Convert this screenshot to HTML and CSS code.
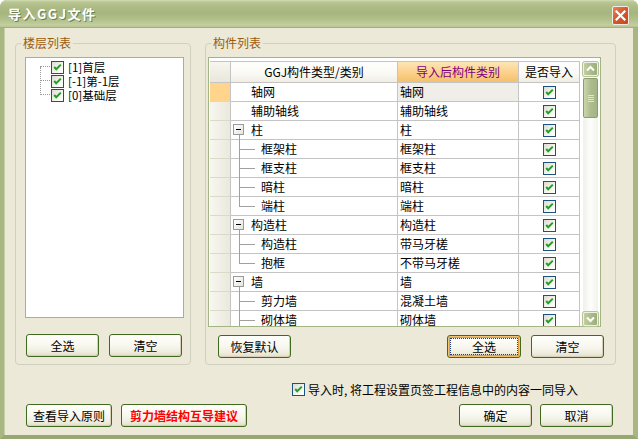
FILE: index.html
```html
<!DOCTYPE html>
<html>
<head>
<meta charset="utf-8">
<link rel="stylesheet" href="styles.css">
</head>
<body>
<div class="window">
  <div class="titlebar">
    <span class="title">导入GGJ文件</span>
    <div class="close"><svg width="11" height="11" viewBox="0 0 11 11"><path d="M1.5 1.5 L9.5 9.5 M9.5 1.5 L1.5 9.5" stroke="#fff" stroke-width="2.2" stroke-linecap="square"/></svg></div>
  </div>
  <div class="frame">
    <div class="groups">
      <div class="group group-left">
        <span class="legend">楼层列表</span>
        <div class="treebox">
          <div class="tree-list">
            <div class="tree-item"><span class="cb"><svg width="11" height="11" viewBox="0 0 11 11"><path d="M2.2 5 L4.2 7.2 L8.8 2.6" fill="none" stroke="#21a121" stroke-width="2"/></svg></span><span class="tree-text">[1]首层</span></div>
            <div class="tree-item"><span class="cb"><svg width="11" height="11" viewBox="0 0 11 11"><path d="M2.2 5 L4.2 7.2 L8.8 2.6" fill="none" stroke="#21a121" stroke-width="2"/></svg></span><span class="tree-text">[-1]第-1层</span></div>
            <div class="tree-item"><span class="cb"><svg width="11" height="11" viewBox="0 0 11 11"><path d="M2.2 5 L4.2 7.2 L8.8 2.6" fill="none" stroke="#21a121" stroke-width="2"/></svg></span><span class="tree-text">[0]基础层</span></div>
          </div>
        </div>
        <div class="btnrow btnrow-left">
          <button class="btn">全选</button>
          <button class="btn">清空</button>
        </div>
      </div>
      <div class="group group-right">
        <span class="legend">构件列表</span>
        <div class="grid">
          <div class="grid-main">
            <div class="row head">
              <div class="rh"></div>
              <div class="c hc">GGJ构件类型/类别</div>
              <div class="c hc hc-active">导入后构件类别</div>
              <div class="c hc">是否导入</div>
            </div>
            <div class="row">
              <div class="rh rh-sel"></div>
              <div class="c c1 top">轴网</div>
              <div class="c c2 cur">轴网</div>
              <div class="c c3"><span class="cb"><svg width="11" height="11" viewBox="0 0 11 11"><path d="M2.2 5 L4.2 7.2 L8.8 2.6" fill="none" stroke="#21a121" stroke-width="2"/></svg></span></div>
            </div>
            <div class="row">
              <div class="rh"></div>
              <div class="c c1 top">辅助轴线</div>
              <div class="c c2">辅助轴线</div>
              <div class="c c3"><span class="cb"><svg width="11" height="11" viewBox="0 0 11 11"><path d="M2.2 5 L4.2 7.2 L8.8 2.6" fill="none" stroke="#21a121" stroke-width="2"/></svg></span></div>
            </div>
            <div class="row">
              <div class="rh"></div>
              <div class="c c1 parent"><span class="exp"></span>柱</div>
              <div class="c c2">柱</div>
              <div class="c c3"><span class="cb"><svg width="11" height="11" viewBox="0 0 11 11"><path d="M2.2 5 L4.2 7.2 L8.8 2.6" fill="none" stroke="#21a121" stroke-width="2"/></svg></span></div>
            </div>
            <div class="row">
              <div class="rh"></div>
              <div class="c c1 child">框架柱</div>
              <div class="c c2">框架柱</div>
              <div class="c c3"><span class="cb"><svg width="11" height="11" viewBox="0 0 11 11"><path d="M2.2 5 L4.2 7.2 L8.8 2.6" fill="none" stroke="#21a121" stroke-width="2"/></svg></span></div>
            </div>
            <div class="row">
              <div class="rh"></div>
              <div class="c c1 child">框支柱</div>
              <div class="c c2">框支柱</div>
              <div class="c c3"><span class="cb"><svg width="11" height="11" viewBox="0 0 11 11"><path d="M2.2 5 L4.2 7.2 L8.8 2.6" fill="none" stroke="#21a121" stroke-width="2"/></svg></span></div>
            </div>
            <div class="row">
              <div class="rh"></div>
              <div class="c c1 child">暗柱</div>
              <div class="c c2">暗柱</div>
              <div class="c c3"><span class="cb"><svg width="11" height="11" viewBox="0 0 11 11"><path d="M2.2 5 L4.2 7.2 L8.8 2.6" fill="none" stroke="#21a121" stroke-width="2"/></svg></span></div>
            </div>
            <div class="row">
              <div class="rh"></div>
              <div class="c c1 child last">端柱</div>
              <div class="c c2">端柱</div>
              <div class="c c3"><span class="cb"><svg width="11" height="11" viewBox="0 0 11 11"><path d="M2.2 5 L4.2 7.2 L8.8 2.6" fill="none" stroke="#21a121" stroke-width="2"/></svg></span></div>
            </div>
            <div class="row">
              <div class="rh"></div>
              <div class="c c1 parent"><span class="exp"></span>构造柱</div>
              <div class="c c2">构造柱</div>
              <div class="c c3"><span class="cb"><svg width="11" height="11" viewBox="0 0 11 11"><path d="M2.2 5 L4.2 7.2 L8.8 2.6" fill="none" stroke="#21a121" stroke-width="2"/></svg></span></div>
            </div>
            <div class="row">
              <div class="rh"></div>
              <div class="c c1 child">构造柱</div>
              <div class="c c2">带马牙槎</div>
              <div class="c c3"><span class="cb"><svg width="11" height="11" viewBox="0 0 11 11"><path d="M2.2 5 L4.2 7.2 L8.8 2.6" fill="none" stroke="#21a121" stroke-width="2"/></svg></span></div>
            </div>
            <div class="row">
              <div class="rh"></div>
              <div class="c c1 child last">抱框</div>
              <div class="c c2">不带马牙槎</div>
              <div class="c c3"><span class="cb"><svg width="11" height="11" viewBox="0 0 11 11"><path d="M2.2 5 L4.2 7.2 L8.8 2.6" fill="none" stroke="#21a121" stroke-width="2"/></svg></span></div>
            </div>
            <div class="row">
              <div class="rh"></div>
              <div class="c c1 parent"><span class="exp"></span>墙</div>
              <div class="c c2">墙</div>
              <div class="c c3"><span class="cb"><svg width="11" height="11" viewBox="0 0 11 11"><path d="M2.2 5 L4.2 7.2 L8.8 2.6" fill="none" stroke="#21a121" stroke-width="2"/></svg></span></div>
            </div>
            <div class="row">
              <div class="rh"></div>
              <div class="c c1 child">剪力墙</div>
              <div class="c c2">混凝土墙</div>
              <div class="c c3"><span class="cb"><svg width="11" height="11" viewBox="0 0 11 11"><path d="M2.2 5 L4.2 7.2 L8.8 2.6" fill="none" stroke="#21a121" stroke-width="2"/></svg></span></div>
            </div>
            <div class="row">
              <div class="rh"></div>
              <div class="c c1 child">砌体墙</div>
              <div class="c c2">砌体墙</div>
              <div class="c c3"><span class="cb"><svg width="11" height="11" viewBox="0 0 11 11"><path d="M2.2 5 L4.2 7.2 L8.8 2.6" fill="none" stroke="#21a121" stroke-width="2"/></svg></span></div>
            </div>
          </div>
          <div class="vscroll">
            <div class="sb-btn"><svg width="13" height="12" viewBox="0 0 13 12"><path d="M3 7.5 L6.5 4 L10 7.5" fill="none" stroke="#fff" stroke-width="2"/></svg></div>
            <div class="sb-thumb"><span class="grip"></span></div>
            <div class="sb-track"></div>
            <div class="sb-btn"><svg width="13" height="12" viewBox="0 0 13 12"><path d="M3 4.5 L6.5 8 L10 4.5" fill="none" stroke="#fff" stroke-width="2"/></svg></div>
          </div>
        </div>
        <div class="btnrow btnrow-right">
          <button class="btn">恢复默认</button>
          <span class="spacer"></span>
          <button class="btn btn-focus">全选</button>
          <button class="btn">清空</button>
        </div>
      </div>
    </div>
    <div class="option">
      <span class="cb"><svg width="11" height="11" viewBox="0 0 11 11"><path d="M2.2 5 L4.2 7.2 L8.8 2.6" fill="none" stroke="#21a121" stroke-width="2"/></svg></span>
      <span class="option-text">导入时, 将工程设置页签工程信息中的内容一同导入</span>
    </div>
    <div class="bottom">
      <button class="btn btn-wide">查看导入原则</button>
      <button class="btn btn-red">剪力墙结构互导建议</button>
      <span class="spacer"></span>
      <button class="btn">确定</button>
      <button class="btn">取消</button>
    </div>
  </div>
</div>
</body>
</html>
```

FILE: styles.css
```css
* { box-sizing: border-box; }

body {
  margin: 0;
  width: 638px;
  height: 439px;
  font-family: "Noto Sans CJK SC", "DejaVu Sans", sans-serif;
  font-size: 12px;
  color: #000;
  background: #fff;
}

.window {
  width: 638px;
  height: 439px;
  display: flex;
  flex-direction: column;
  border-radius: 7px 7px 0 0;
  overflow: hidden;
  background: #a8b782;
}

.titlebar {
  height: 28px;
  flex: none;
  display: flex;
  align-items: center;
  padding: 0 9px 0 8px;
  background: linear-gradient(#d3dbb3 0, #bac794 2px, #aebd86 6px, #a6b57d 13px, #b3c18c 20px, #c3cf9e 25px, #b7c492 27px, #8c9c68 28px);
}

.title {
  color: #fff;
  font-weight: bold;
  font-size: 13px;
  letter-spacing: 1.5px;
  text-shadow: 1px 1px 0 #6f7d50;
  flex: 1;
  margin-top: -1px;
}

.close {
  width: 17px;
  height: 19px;
  margin-top: 3px;
  border: 1px solid #f4ece2;
  border-radius: 2px;
  background: linear-gradient(135deg, #e8845d, #d65a2e 45%, #c24a20);
  display: flex;
  align-items: center;
  justify-content: center;
}

.frame {
  flex: 1;
  display: flex;
  flex-direction: column;
  background: #ece9d8;
  border-left: 4px solid #a8b782;
  border-right: 5px solid #a8b782;
  border-bottom: 4px solid #98a873;
  box-shadow: inset 1px 0 0 #c4cfa4;
}

.groups {
  display: flex;
  gap: 14px;
  margin-top: 15px;
  padding-left: 11px;
  height: 322px;
}

.group {
  position: relative;
  height: 322px;
  border: 1px solid #d0d0bf;
  border-radius: 4px;
  padding-top: 13px;
}

.group-left { width: 176px; padding-left: 9px; }
.group-right { width: 411px; padding-left: 2px; }

.legend {
  position: absolute;
  top: -8px;
  left: 5px;
  padding: 0 2px;
  background: #ece9d8;
  color: #9d5b0c;
  line-height: 14px;
}

.treebox {
  width: 159px;
  height: 261px;
  background: #fff;
  border: 1px solid #a3b585;
  padding-top: 2px;
}

.tree-list {
  position: relative;
  padding-left: 25px;
}

.tree-list::before {
  content: "";
  position: absolute;
  left: 14px;
  top: 7px;
  height: 28px;
  border-left: 1px dotted #9a9a9a;
}

.tree-item {
  position: relative;
  height: 14px;
  display: flex;
  align-items: center;
  gap: 4px;
}

.tree-item::before {
  content: "";
  position: absolute;
  left: -11px;
  top: 6px;
  width: 10px;
  border-top: 1px dotted #9a9a9a;
}

.tree-text {
  display: block;
  height: 14px;
  line-height: 14px;
  font-size: 11.5px;
}

.cb {
  width: 13px;
  height: 13px;
  flex: none;
  display: inline-flex;
  align-items: center;
  justify-content: center;
  border: 1px solid #1c5180;
  background: linear-gradient(135deg, #dcdcd3, #f6f6f2 60%, #fff);
}

.btnrow { display: flex; }
.btnrow-left { margin-top: 16px; padding-left: 1px; gap: 10px; }
.btnrow-right { margin-top: 8px; padding-left: 10px; padding-right: 11px; gap: 10px; }
.spacer { flex: 1; }

.btn {
  width: 73px;
  height: 23px;
  padding: 0;
  border: 1px solid #3f6a20;
  border-radius: 3px;
  font-family: "Noto Sans CJK SC", sans-serif;
  font-size: 12px;
  color: #000;
  background: linear-gradient(#fffffb 0, #f8f7ef 50%, #efede0 80%, #e2ddc6 100%);
  box-shadow: inset -1px -1px 0 #d6d0b8;
  position: relative;
}

.btn-focus {
  width: 74px;
  box-shadow: inset 0 0 0 1px #f4c26e, inset 0 0 0 2px #e39a37;
}

.btn-focus::after {
  content: "";
  position: absolute;
  inset: 2px;
  border: 1px dotted #1a3b88;
}

.btn-wide { width: 86px; }
.btn-red { width: 126px; color: #ff0000; font-weight: bold; }

/* grid */
.grid {
  width: 393px;
  height: 270px;
  display: flex;
  align-items: flex-start;
  background: #fff;
  border: 1px solid #a3b585;
  padding: 3px 2px 0 1px;
}

.grid-main {
  width: 370px;
  height: 265px;
  overflow: hidden;
}

.row {
  display: grid;
  grid-template-columns: 21px 167px 121px 61px;
  height: 19px;
}

.row.head { height: 22px; }

.c {
  position: relative;
  border-right: 1px solid #c4c4c4;
  border-bottom: 1px solid #c4c4c4;
  line-height: 18px;
  white-space: nowrap;
}

.rh {
  border-right: 1px solid #c4c4c4;
  border-bottom: 1px solid #dcd9c8;
  background: linear-gradient(90deg, #f7f6f0, #ebe9dc);
}

.head .rh {
  border-top: 1px solid #c4c4c4;
  border-bottom: 1px solid #c4c4c4;
  background: linear-gradient(#f7f6f0, #e9e7da);
}

.rh-sel { background: #ffd48c; }

.hc {
  border-top: 1px solid #c4c4c4;
  text-align: center;
  line-height: 20px;
  background: linear-gradient(#fefefd 0, #faf9f4 60%, #efede3 100%);
}

.hc-active {
  color: #800080;
  background: linear-gradient(#fde5b5 0, #fbd08a 55%, #f4c06c 100%);
}

.c1.top, .c1.parent { padding-left: 20px; }
.c1.child { padding-left: 30px; }
.c2 { padding-left: 2px; }
.cur { background: #efeee8; }

.c3 {
  display: flex;
  align-items: center;
  justify-content: center;
  padding-left: 1px;
}

.exp {
  position: absolute;
  left: 2px;
  top: 3px;
  width: 11px;
  height: 11px;
  border: 1px solid #9a9a9a;
  background: linear-gradient(135deg, #fff, #e4e4de);
}

.exp::after {
  content: "";
  position: absolute;
  left: 2px;
  top: 4px;
  width: 5px;
  height: 1px;
  background: #000;
}

.parent::after {
  content: "";
  position: absolute;
  left: 8px;
  top: 14px;
  bottom: -1px;
  border-left: 1px solid #a0a0a0;
}

.child::before {
  content: "";
  position: absolute;
  left: 8px;
  top: 0;
  bottom: -1px;
  border-left: 1px solid #a0a0a0;
}

.child.last::before { bottom: 9px; }

.child::after {
  content: "";
  position: absolute;
  left: 8px;
  top: 9px;
  width: 16px;
  border-top: 1px solid #a0a0a0;
}

/* scrollbar */
.vscroll {
  width: 15px;
  height: 264px;
  margin-top: 1px;
  margin-left: 3px;
  display: flex;
  flex-direction: column;
  background: linear-gradient(90deg, #f1f0e9, #fdfdfb 50%, #f3f2ec);
}

.sb-btn {
  height: 14px;
  flex: none;
  border: 1px solid #eef1e4;
  border-radius: 2px;
  background: linear-gradient(90deg, #c2cea1, #a9b988 60%, #9dae7c);
  display: flex;
  align-items: center;
  justify-content: center;
  box-shadow: 0 0 0 1px #b6c29a;
}

.sb-thumb {
  margin-top: 2px;
  height: 40px;
  flex: none;
  border: 1px solid #8e9c6c;
  border-radius: 2px;
  background: linear-gradient(90deg, #cbd5ad, #adbc8d 50%, #a4b484);
  display: flex;
  align-items: center;
  justify-content: center;
}

.grip {
  width: 6px;
  height: 7px;
  background: repeating-linear-gradient(#e0e7cf 0, #e0e7cf 1px, transparent 1px, transparent 2px);
}

.sb-track { flex: 1; }

/* option + bottom */
.option {
  display: flex;
  align-items: center;
  gap: 3px;
  margin-top: 18px;
  padding-left: 288px;
  height: 13px;
}

.option-text { line-height: 13px; }

.bottom {
  display: flex;
  gap: 9px;
  margin-top: 8px;
  padding-left: 22px;
  padding-right: 20px;
}

.bottom .btn:nth-last-child(2) { margin-right: -1px; }
```
